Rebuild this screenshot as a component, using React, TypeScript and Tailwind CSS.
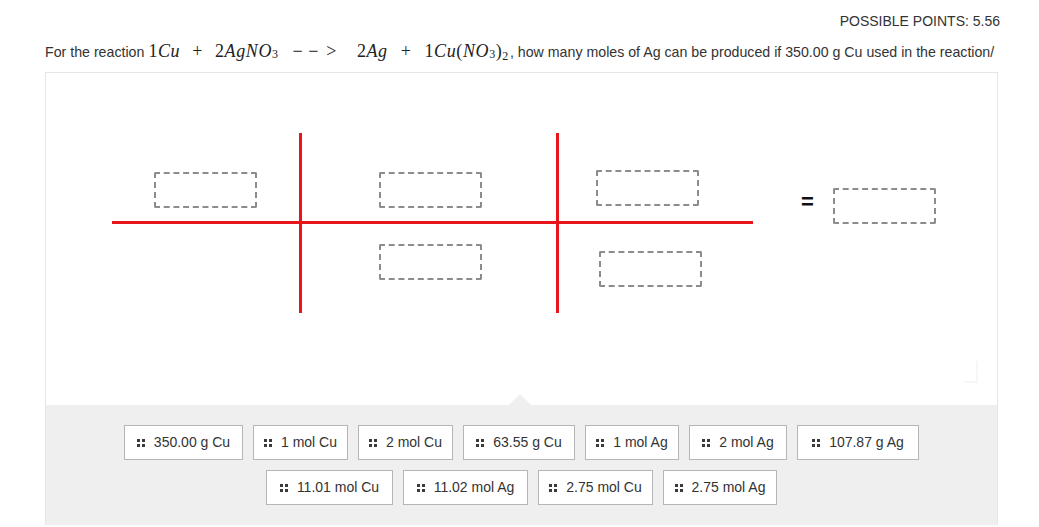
import React from "react";

const sans = { fontFamily: '"Liberation Sans", Arial, sans-serif' };

const Grip = () => (
  <svg width="8" height="8" viewBox="0 0 8 8" className="shrink-0">
    <rect x="0" y="0" width="3" height="3" fill="#3a3a3a" />
    <rect x="5" y="0" width="3" height="3" fill="#3a3a3a" />
    <rect x="0" y="5" width="3" height="3" fill="#3a3a3a" />
    <rect x="5" y="5" width="3" height="3" fill="#3a3a3a" />
  </svg>
);

const Chip = ({ label, w }: { label: string; w: string }) => (
  <div
    className={`${w} h-[35px] flex items-center justify-center gap-[9px] bg-white border border-[#b5b5b5] text-[14px] text-[#333]`}
  >
    <Grip />
    <span>{label}</span>
  </div>
);

const Drop = ({ pos }: { pos: string }) => (
  <div className={`absolute ${pos} w-[103px] h-[36px] border-2 border-dashed border-[#8c8c8c] rounded-[2px]`} />
);

const M = ({ children }: { children: React.ReactNode }) => <span className="italic">{children}</span>;

const Formula = () => (
  <span
    className="inline-flex items-baseline text-[18px] tracking-[0.6px] text-[#222] ml-[4px] mr-[1px]"
    style={{ fontFamily: '"Liberation Serif", "Times New Roman", serif' }}
  >
    <span>1</span>
    <M>Cu</M>
    <span className="mx-[12px]">+</span>
    <span>2</span>
    <M>AgNO</M>
    <sub className="text-[12px] relative top-[1px]">3</sub>
    <span className="ml-[14px] mr-[5px]">−</span>
    <span className="mr-[7px]">−</span>
    <span>&gt;</span>
    <span className="ml-[20px]">2</span>
    <M>Ag</M>
    <span className="mx-[13px]">+</span>
    <span>1</span>
    <M>Cu</M>
    <span>(</span>
    <M>NO</M>
    <sub className="text-[12px] relative top-[1px]">3</sub>
    <span>)</span>
    <sub className="text-[12px] relative top-[3px]">2</sub>
  </span>
);

export default function App() {
  return (
    <div className="w-[1039px] h-[527px] bg-white overflow-hidden" style={sans}>
      <div className="pt-[13px] pr-[39px] text-right text-[14px] text-[#333] leading-[16px]">
        POSSIBLE POINTS: 5.56
      </div>
      <div className="mt-[12px] ml-[45px] text-[14.2px] text-[#333] leading-[20px] whitespace-nowrap">
        For the reaction
        <Formula />
        , how many moles of Ag can be produced if 350.00 g Cu used in the reaction/
      </div>
      <div className="ml-[45px] mt-[10px] w-[953px] border border-[#e6e6e6] border-b-0">
        <div className="relative h-[332px] bg-white">
          <div className="absolute left-[66px] top-[148px] w-[641px] h-[3px] bg-[#e8161b]" />
          <div className="absolute left-[253px] top-[60px] w-[3px] h-[180px] bg-[#e8161b]" />
          <div className="absolute left-[510px] top-[60px] w-[3px] h-[180px] bg-[#e8161b]" />
          <Drop pos="left-[108px] top-[99px]" />
          <Drop pos="left-[333px] top-[99px]" />
          <Drop pos="left-[333px] top-[171px]" />
          <Drop pos="left-[550px] top-[97px]" />
          <Drop pos="left-[553px] top-[178px]" />
          <div className="absolute left-[755px] top-[117px] text-[22px] font-bold text-[#111] leading-[24px]">=</div>
          <Drop pos="left-[787px] top-[115px]" />
          <div className="absolute left-[918px] top-[288px] w-[14px] h-[22px] border-r-2 border-b-2 border-[#f7f7f7]" />
          <div className="absolute left-[463px] bottom-0 w-0 h-0 border-l-[11px] border-r-[11px] border-b-[11px] border-l-transparent border-r-transparent border-b-[#efefef]" />
        </div>
        <div className="bg-[#efefef] pt-[20px] pb-[20px] flex flex-col items-center gap-[10px]">
          <div className="flex gap-[10px]">
            <Chip label="350.00 g Cu" w="w-[119px]" />
            <Chip label="1 mol Cu" w="w-[95px]" />
            <Chip label="2 mol Cu" w="w-[95px]" />
            <Chip label="63.55 g Cu" w="w-[112px]" />
            <Chip label="1 mol Ag" w="w-[94px]" />
            <Chip label="2 mol Ag" w="w-[98px]" />
            <Chip label="107.87 g Ag" w="w-[122px]" />
          </div>
          <div className="flex gap-[10px]">
            <Chip label="11.01 mol Cu" w="w-[127px]" />
            <Chip label="11.02 mol Ag" w="w-[125px]" />
            <Chip label="2.75 mol Cu" w="w-[115px]" />
            <Chip label="2.75 mol Ag" w="w-[114px]" />
          </div>
        </div>
      </div>
    </div>
  );
}
